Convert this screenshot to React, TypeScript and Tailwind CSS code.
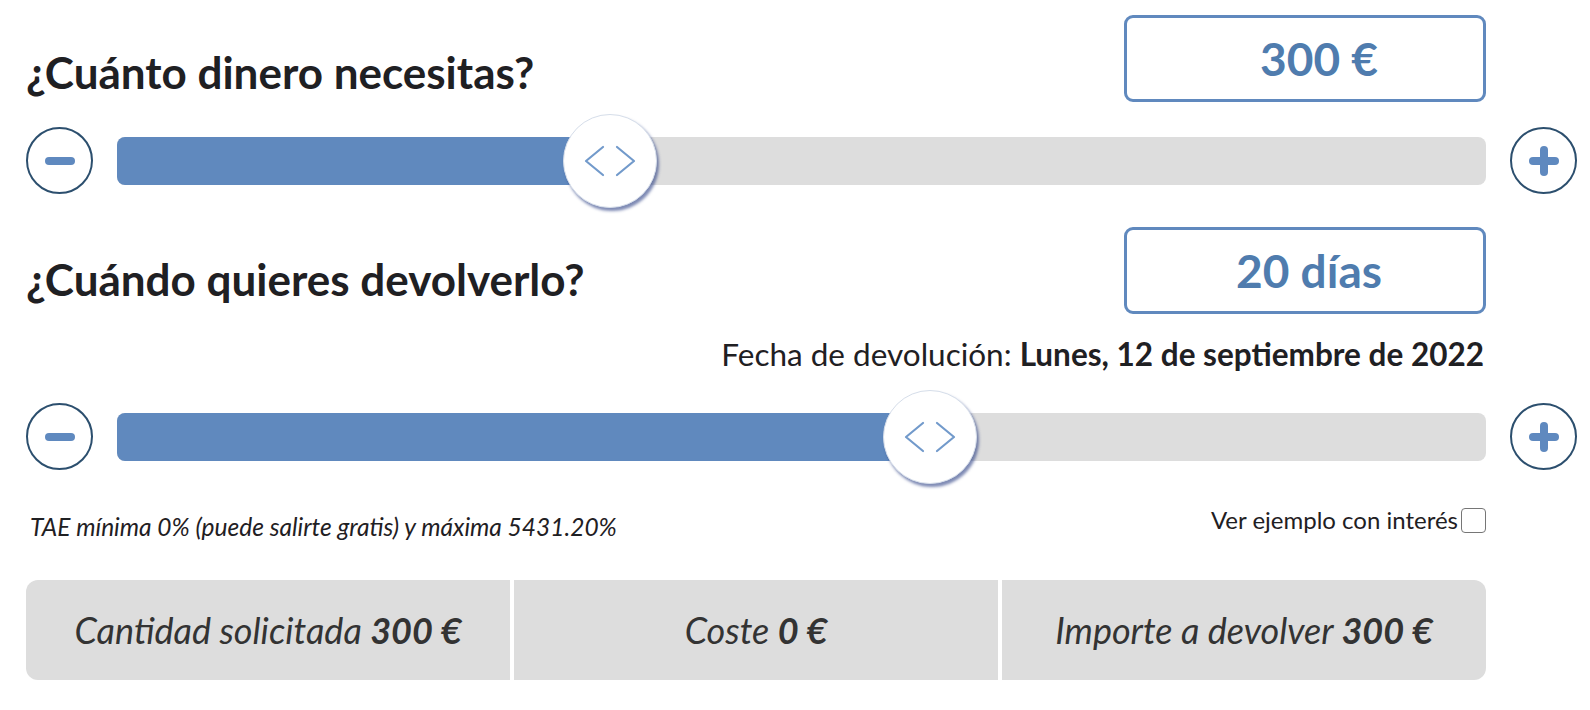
import React from 'react';

const font = { fontFamily: 'Lato, "Open Sans", sans-serif' };

function RoundButton({ plus }: { plus?: boolean }) {
  return (
    <button className="relative flex h-[67px] w-[67px] shrink-0 items-center justify-center rounded-full border-2 border-[#2c4f6e] bg-white">
      <span className="absolute h-[8px] w-[30px] rounded-full bg-[#5f89bf]" />
      {plus && <span className="absolute h-[30px] w-[8px] rounded-full bg-[#5f89bf]" />}
    </button>
  );
}

function Slider({ pct }: { pct: number }) {
  return (
    <div className="flex h-[95px] w-[1551px] items-center gap-[24px]">
      <RoundButton />
      <div className="relative h-[48px] flex-1 rounded-[8px] bg-[#dddddd]">
        <div className="h-full rounded-l-[8px] bg-[#6089be]" style={{ width: `${pct}%` }} />
        {/* thumb */}
        <div
          className="absolute top-1/2 flex h-[94px] w-[94px] -translate-x-1/2 -translate-y-1/2 items-center justify-center rounded-full border border-[#d6deea] bg-white shadow-[2px_3px_3px_rgba(40,60,130,0.6)]"
          style={{ left: `${pct}%` }}
        >
          <svg width="56" height="32" viewBox="0 0 56 32" fill="none" stroke="#729acb" strokeWidth="2.2" strokeLinecap="round" strokeLinejoin="round">
            <path d="M21 2 L4 16 L21 30" />
            <path d="M35 2 L52 16 L35 30" />
          </svg>
        </div>
      </div>
      <RoundButton plus />
    </div>
  );
}

function ValueBox({ children, offset }: { children: React.ReactNode; offset: string }) {
  return (
    <div className={`flex h-[87px] w-[362px] items-center justify-center rounded-[9px] border-[3px] border-[#6089be] bg-white text-[46px] font-bold text-[#4f7cae] ${offset}`}>
      {children}
    </div>
  );
}

export default function App() {
  return (
    <div className="min-h-screen bg-white pl-[26px] text-[#1f2023]" style={font}>
      <div className="w-[1460px] pt-[15px]">
        <div className="flex items-start justify-between">
          <h2 className="mt-[31px] text-[44px] leading-[53px] font-bold">¿Cuánto dinero necesitas?</h2>
          <ValueBox offset="pl-[28px]">300 €</ValueBox>
        </div>
      </div>

      <div className="mt-[11px]">
        <Slider pct={36} />
      </div>

      <div className="mt-[19px] w-[1460px]">
        <div className="flex items-start justify-between">
          <h2 className="mt-[26px] text-[44px] leading-[53px] font-bold">¿Cuándo quieres devolverlo?</h2>
          <ValueBox offset="pl-[8px]">20 días</ValueBox>
        </div>
        <p className="mt-[21px] pr-[2px] text-right text-[31.5px] leading-[38px]">
          Fecha de devolución: <span className="font-bold">Lunes, 12 de septiembre de 2022</span>
        </p>
      </div>

      <div className="mt-[16px]">
        <Slider pct={59.4} />
      </div>

      <div className="mt-[21px] flex w-[1460px] items-start justify-between">
        <p className="mt-[7px] pl-[4px] text-[24.5px] leading-[30px] italic">
          TAE mínima 0% (puede salirte gratis) y máxima 5431.20%
        </p>
        <label className="flex items-center gap-[3px] text-[24px] leading-[30px]">
          Ver ejemplo con interés
          <span className="inline-block h-[25px] w-[25px] rounded-[4px] border-[1.5px] border-[#767676] bg-white" />
        </label>
      </div>

      <div className="mt-[38px] grid h-[100px] w-[1460px] grid-cols-3 gap-[4px] overflow-hidden rounded-[12px] text-[36px] italic text-[#333]">
        <div className="flex items-center justify-center bg-[#dddddd]">
          Cantidad solicitada&nbsp;<span className="font-bold">300 €</span>
        </div>
        <div className="flex items-center justify-center bg-[#dddddd]">
          Coste&nbsp;<span className="font-bold">0 €</span>
        </div>
        <div className="flex items-center justify-center bg-[#dddddd]">
          Importe a devolver&nbsp;<span className="font-bold">300 €</span>
        </div>
      </div>
    </div>
  );
}
